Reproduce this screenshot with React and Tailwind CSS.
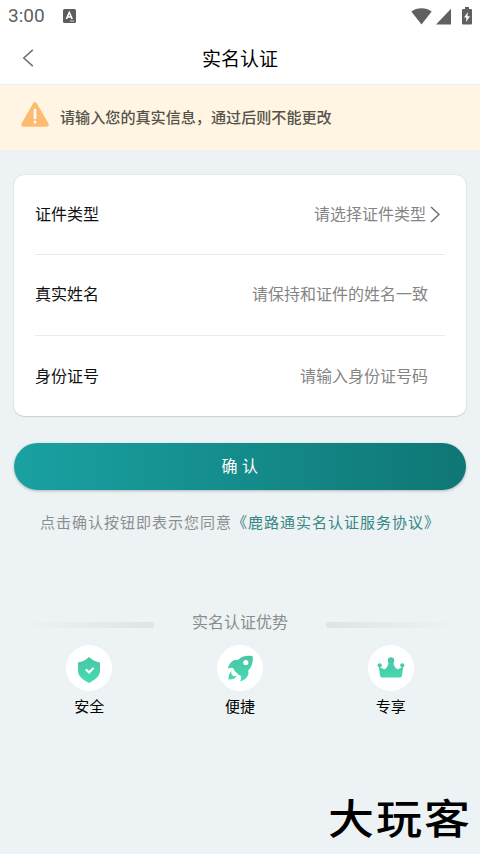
import React from 'react'

const StatusBar = () => (
  <div className="flex h-8 items-center justify-between pl-2 pr-[8px]">
    <div className="flex items-center gap-[18px]">
      <span className="font-[Roboto] text-[19px] leading-8 text-[#5f5f5f]">3:00</span>
      <svg width="13" height="14" viewBox="0 0 13 14">
        <rect width="13" height="14" rx="1.5" fill="#5c5c5c" />
        <path d="M3.400 10 6.300 3.400 9.200 10M4.400 8h3.800" fill="none" stroke="#fff" strokeWidth="1.600" />
        <path d="M7 12h4" stroke="#cfcfcf" strokeWidth="1" />
      </svg>
    </div>
    <div className="flex items-center text-[#606060]">
      <svg width="21" height="17" viewBox="0 0 21 17" fill="currentColor">
        <path d="M.3 3.600C5.500-1 15.500-1 20.700 3.600L10.500 16.500Z" />
      </svg>
      <svg className="ml-1" width="15" height="17" viewBox="0 0 15 17" fill="currentColor">
        <path d="M15 .8V16.500H0Z" />
      </svg>
      <svg className="ml-[11px]" width="10" height="18" viewBox="0 0 10 18">
        <path d="M3 0h4v2h2q1 0 1 1v13.500q0 1-1 1H1q-1 0-1-1V3q0-1 1-1h2Z" fill="currentColor" />
        <path d="M5.800 5 2 10.500h2.400L4 15l4-5.800H5.500Z" fill="#fff" />
      </svg>
    </div>
  </div>
)

const NavBar = () => (
  <header className="grid h-[53px] grid-cols-3 items-center border-b border-[#edf1f3]">
    <svg className="ml-[22px]" width="12" height="18" viewBox="0 0 12 18" fill="none" stroke="#737373" strokeWidth="1.600">
      <path d="M10.800.8 1.800 9l9 8.200" />
    </svg>
    <h1 className="pb-[2px] text-center text-[19px] leading-none text-black">实名认证</h1>
  </header>
)

const Notice = () => (
  <div className="flex h-[65px] items-center bg-[#fff5e2] pl-[21px]">
    <svg className="mb-[6px]" width="28" height="25" viewBox="0 0 28 25">
      <path d="M14 2.500 25.500 22.500h-23Z" fill="#fdbb70" stroke="#fdbb70" strokeWidth="4.500" strokeLinejoin="round" />
      <path d="M14 8v8" stroke="#fff" strokeWidth="2.600" strokeLinecap="round" />
      <circle cx="14" cy="20" r="1.500" fill="#fff" />
    </svg>
    <p className="mb-[3px] ml-[11px] text-[15.100px] font-medium text-[#55524c]">请输入您的真实信息，通过后则不能更改</p>
  </div>
)

const rows = [
  { label: '证件类型', hint: '请选择证件类型', arrow: true },
  { label: '真实姓名', hint: '请保持和证件的姓名一致' },
  { label: '身份证号', hint: '请输入身份证号码' },
]

const Form = () => (
  <section className="mx-[14px] mt-[25px] rounded-[10px] bg-white px-[21px] shadow-[0_0_2px_rgba(0,0,0,0.14),0_1px_1px_rgba(0,0,0,0.1)]">
    {rows.map(({ label, hint, arrow }) => (
      <div key={label} className="flex h-[81px] items-center justify-between border-b border-[#ebebeb] pb-1 text-base first:h-20 last:h-20 last:border-0 last:pb-[2px]">
        <span className="text-[#111]">{label}</span>
        {arrow ? (
          <span className="flex items-center gap-1 pr-[5px] text-[#858585]">
            {hint}
            <svg className="mt-[3px]" width="10" height="17" viewBox="0 0 10 17" fill="none" stroke="#6f6f6f" strokeWidth="1.500">
              <path d="M1 1l8 7.500L1 16" />
            </svg>
          </span>
        ) : (
          <span className="pr-[17px] text-[#858585]">{hint}</span>
        )}
      </div>
    ))}
  </section>
)

const ShieldIcon = () => (
  <svg width="46" height="46" viewBox="0 0 46 46">
    <path d="M23 12c3 3 7 5 11 5.500v8.500c0 5-5 9-11 12-6-3-11-7-11-12v-8.500C16 17 20 15 23 12Z" fill="url(#mint)" />
    <path d="m20.500 25 2.500 2.500 4-4" fill="none" stroke="#fff" strokeWidth="2.200" strokeLinecap="round" />
  </svg>
)

const RocketIcon = () => (
  <svg width="46" height="46" viewBox="0 0 46 46">
    <path d="M35 11c-6-.8-10.500.3-14 4-4-1-8.500 2-10.200 8.500 2.200-1 4.200-1 5.700-.2l.8 2.200 4.500 4.500 2 .8c.6 1.700.4 3.600-.6 5.700 6-2 9.300-6.200 8-11 3.500-3.500 5-8 4.500-13.500Q35.600 11.100 35 11Z" fill="url(#mint)" />
    <circle cx="28.800" cy="17.500" r="2.600" fill="#fff" />
    <path d="M14.800 26c-2.300 1.500-3.500 4.500-3.300 8.500 4 .2 7-1 8-3.800-1.700.8-3.200.6-4.200-.4s-1.300-2.500-.5-4.300Z" fill="url(#mint)" />
  </svg>
)

const CrownIcon = () => (
  <svg width="46" height="46" viewBox="0 0 46 46" fill="url(#mint)">
    <path d="M10.800 21.500c2 .6 4.500 3.500 6.200 2.500s3.500-4 4-8h4c.5 4 2.300 7 4 8s4.200-1.900 6.200-2.500L34 30.500q-.3 2-2 2H14q-1.700 0-2-2Z" />
    <circle cx="23" cy="15.500" r="3.200" />
    <circle cx="11.700" cy="20.300" r="2.100" />
    <circle cx="34.300" cy="20.300" r="2.100" />
  </svg>
)

const perks = [
  { name: '安全', Icon: ShieldIcon },
  { name: '便捷', Icon: RocketIcon },
  { name: '专享', Icon: CrownIcon },
]

const Perks = () => (
  <section className="mt-[75px]">
    <div className="flex items-center justify-center gap-[38px]">
      <i className="mt-[8px] h-[6px] w-[132px] rounded-full bg-linear-to-r from-transparent to-[#e0e3e4]" />
      <h2 className="text-base text-[#8a8d8e]">实名认证优势</h2>
      <i className="mt-[8px] h-[6px] w-[132px] rounded-full bg-linear-to-l from-transparent to-[#e0e3e4]" />
    </div>
    <div className="mt-3 grid grid-cols-3 px-[14px]">
      {perks.map(({ name, Icon }) => (
        <div key={name} className="flex flex-col items-center">
          <div className="size-[46px] rounded-full bg-white">
            <Icon />
          </div>
          <span className="mt-[3px] text-[15px] leading-6 text-black">{name}</span>
        </div>
      ))}
    </div>
  </section>
)

export default function App() {
  return (
    <div className="relative flex h-[854px] w-[480px] flex-col overflow-hidden bg-[#edf2f5] font-['Noto_Sans_CJK_SC',sans-serif]">
      <svg className="absolute" width="0" height="0">
        <defs>
          <linearGradient id="mint" gradientUnits="userSpaceOnUse" x1="0" y1="12" x2="0" y2="37">
            <stop stopColor="#49c5a5" />
            <stop offset="1" stopColor="#45dcb4" />
          </linearGradient>
        </defs>
      </svg>
      <div className="bg-white">
        <StatusBar />
        <NavBar />
      </div>
      <Notice />
      <Form />
      <button className="mx-[14px] mt-[27px] h-[47px] rounded-full bg-linear-to-r from-[#1aa1a2] to-[#0f7775] pb-[3px] text-base tracking-[0.500px] text-white shadow-[0_1px_3px_rgba(0,0,0,0.25)]">
        确 认
      </button>
      <p className="mt-[21px] text-center text-[15px] tracking-[1px] text-[#8b8e8f]">
        点击确认按钮即表示您同意<a className="text-[#388784]">《鹿路通实名认证服务协议》</a>
      </p>
      <Perks />
      <div className="absolute bottom-[12px] right-[8px] origin-center scale-y-[0.88] text-[46px] font-medium leading-[52px] tracking-[2px] text-black">大玩客</div>
    </div>
  )
}
